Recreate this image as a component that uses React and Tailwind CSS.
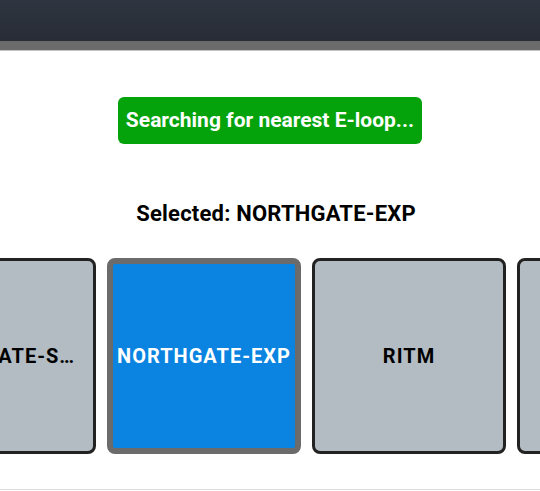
const stations = ["NORTHGATE-SEA", "NORTHGATE-EXP", "RITM", "UNIVERSITY"];

const StationCard = ({ name, selected }) => (
  <div
    className={
      selected
        ? "w-[194px] h-[196px] shrink-0 rounded-lg border-[6px] border-[#6b6b6b] bg-[#0a84e0] flex items-center justify-center"
        : "w-[194px] h-[196px] shrink-0 rounded-lg border-[3px] border-[#222] bg-[#b3bcc3] flex items-center justify-center px-[7px]"
    }
  >
    <span
      className={
        selected
          ? "truncate text-[20px] font-bold tracking-[1px] text-white"
          : "truncate text-[20px] font-bold tracking-[1px] text-black"
      }
    >
      {name}
    </span>
  </div>
);

export default function App() {
  const selected = "NORTHGATE-EXP";
  return (
    <div className="w-[540px] h-[491px] bg-white flex flex-col overflow-hidden font-['Roboto',sans-serif]">
      <div className="h-[41px] bg-gradient-to-b from-[#2f3540] to-[#272c35]" />
      <div className="h-[10px] bg-[#6b6b6b] border-b border-[#c4c4c4]" />
      <div className="flex justify-center mt-[46px]">
        <div className="h-[47px] rounded-md bg-[#04a30b] px-[8px] flex items-center text-[21px] font-bold text-white">
          Searching for nearest E-loop...
        </div>
      </div>
      <div className="mt-[57px] pl-[12px] text-center text-[22px] font-bold tracking-[0.2px] text-black leading-[26px]">
        Selected: {selected}
      </div>
      <div className="mt-[31px] overflow-hidden">
        <div className="flex gap-[11px] ml-[-98px]">
          {stations.map((s) => (
            <StationCard key={s} name={s} selected={s === selected} />
          ))}
        </div>
      </div>
      <div className="mt-auto mb-[1px] h-[1px] bg-[#dcdcdc]" />
    </div>
  );
}
